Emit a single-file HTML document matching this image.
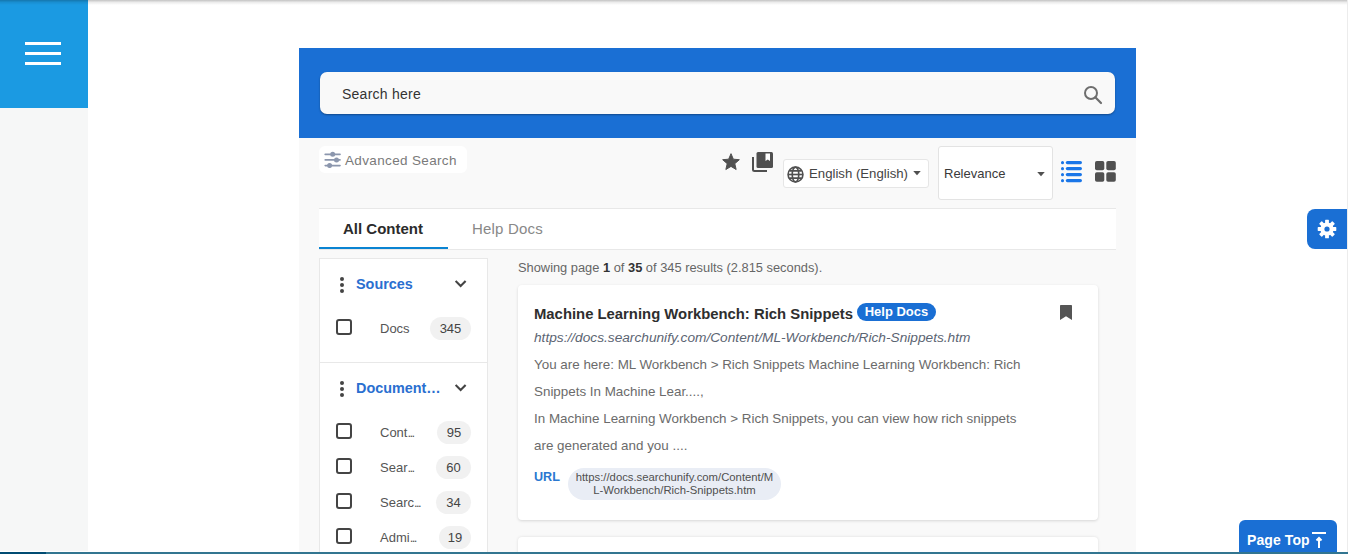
<!DOCTYPE html>
<html><head><meta charset="utf-8">
<style>
*{box-sizing:border-box;margin:0;padding:0}
html,body{width:1348px;height:554px;overflow:hidden;background:#fff;font-family:"Liberation Sans",sans-serif;position:relative}
.abs{position:absolute}
#topshadow{left:0;top:0;width:1348px;height:5px;background:linear-gradient(rgba(0,0,0,.24),rgba(0,0,0,.08) 45%,rgba(0,0,0,0))}
#side{left:0;top:0;width:88px;height:551px;background:#f6f7f7}
#sidetop{left:0;top:0;width:88px;height:108px;background:#1b9ae2}
.hb{left:25px;width:36px;height:3px;background:#fff}
#hdr{left:299px;top:48px;width:837px;height:90px;background:#1a6fd4}
#search{left:320px;top:72px;width:795px;height:42px;background:#f9f9f9;border-radius:7px;box-shadow:0 1px 2px rgba(0,0,0,.35)}
#search .ph{position:absolute;left:22px;top:14px;font-size:14px;color:#333;letter-spacing:0.25px}
#main{left:299px;top:138px;width:837px;height:416px;background:#f9f9f9}
#adv{left:319px;top:146px;width:148px;height:27px;background:#fff;border-radius:6px}
#adv span{position:absolute;left:25px;top:7px;font-size:13.5px;color:#7a7a7a;letter-spacing:0.35px}
#lang{left:783px;top:159px;width:146px;height:29px;background:#fff;border:1px solid #e6e6e6;border-radius:3px}
#lang span{position:absolute;left:25px;top:6px;font-size:13.2px;color:#444}
#rel{left:938px;top:146px;width:115px;height:54px;background:#fff;border:1px solid #e3e3e3;border-radius:3px}
#rel span{position:absolute;left:5px;top:19px;font-size:13px;color:#3a3a3a}
#tabs{left:319px;top:208px;width:797px;height:42px;background:#fff;border-top:1px solid #e8e8e8;border-bottom:1px solid #e8e8e8}
#tab1{left:24px;top:11px;font-size:15px;color:#2b2b2b;font-weight:bold}
#tab2{left:153px;top:11px;font-size:15px;color:#888;letter-spacing:0.2px}
#tabline{left:0;top:38px;width:129px;height:2px;background:#0a84d2}
#filt{left:319px;top:258px;width:169px;height:300px;background:#fff;border:1px solid #e8e8e8}
.fh{font-size:14.4px;color:#2a6fd0;font-weight:bold}
.chev{width:8px;height:8px;border-right:1.8px solid #444;border-bottom:1.8px solid #444;transform:rotate(45deg)}
.dots{width:4px;height:4px;border-radius:50%;background:#444;box-shadow:0 6px 0 #444,0 12px 0 #444}
.cb{width:16px;height:16px;border:2px solid #444;border-radius:3px;background:#fff}
.fl{font-size:13px;color:#555}
.cnt{height:23px;border-radius:12px;background:#f1f1f1;font-size:13px;color:#444;text-align:center;line-height:23px}
#showing{left:518px;top:260px;font-size:12.85px;color:#666}
#card{left:518px;top:285px;width:580px;height:235px;background:#fff;border-radius:4px;box-shadow:0 1px 3px rgba(0,0,0,.14)}
#card2{left:518px;top:537px;width:580px;height:40px;background:#fff;border-radius:4px;box-shadow:0 0 3px rgba(0,0,0,.12)}
#title{left:16px;top:21px;font-size:14.85px;font-weight:bold;color:#2e2e2e;white-space:nowrap}
#badge{left:339px;top:18px;width:79px;height:18px;border-radius:9px;background:#1a6fd4;color:#fff;font-size:13px;font-weight:bold;text-align:center;line-height:17px}
#curl{left:16px;top:45px;font-size:13.7px;font-style:italic;color:#5b6472;white-space:nowrap}
.snip{left:16px;font-size:13.4px;color:#6b6b6b;white-space:nowrap}
#urll{left:16px;top:185px;font-size:12.6px;font-weight:bold;color:#2a78d0}
#urlpill{left:50px;top:183px;width:213px;height:32px;border-radius:16px;background:#e9edf5;font-size:11.3px;color:#505050;text-align:center;line-height:13px;padding-top:3px}
#gear{left:1307px;top:209px;width:41px;height:40px;background:#1a6fd4;border-radius:8px 0 0 8px}
#ptop{left:1239px;top:520px;width:98px;height:40px;background:#1a6fd4;border-radius:6px 6px 0 0}
#ptop span{position:absolute;left:8px;top:12px;font-size:14px;letter-spacing:0.1px;font-weight:bold;color:#fff}
#botbar{left:0;top:552px;width:1348px;height:2px;background:#327590}
#botbar2{left:0;top:552px;width:46px;height:2px;background:#004b72}
#rline{left:1347px;top:0;width:1px;height:554px;background:#ececec}
</style></head>
<body>
<div id="side" class="abs"></div>
<div id="sidetop" class="abs">
  <div class="abs hb" style="top:42px"></div>
  <div class="abs hb" style="top:52px"></div>
  <div class="abs hb" style="top:62px"></div>
</div>
<div id="topshadow" class="abs"></div>

<div id="hdr" class="abs"></div>
<div id="search" class="abs"><span class="ph">Search here</span>
  <svg class="abs" style="left:763px;top:13px" width="20" height="20" viewBox="0 0 20 20"><circle cx="8" cy="8" r="6" fill="none" stroke="#6e6e6e" stroke-width="2"/><line x1="12.3" y1="12.3" x2="18" y2="18" stroke="#6e6e6e" stroke-width="2.2" stroke-linecap="round"/></svg>
</div>

<div id="main" class="abs"></div>
<div id="adv" class="abs">
  <svg class="abs" style="left:5px;top:5px" width="17" height="17" viewBox="0 0 17 17" fill="#8b96ad"><rect x="0.4" y="2.5" width="16.4" height="1.7" rx=".8"/><rect x="0.4" y="8.1" width="16.4" height="1.7" rx=".8"/><rect x="0.4" y="13.7" width="16.4" height="1.7" rx=".8"/><circle cx="8.7" cy="3.35" r="2.5"/><circle cx="12.5" cy="8.95" r="2.5"/><circle cx="5.6" cy="14.55" r="2.5"/></svg>
  <span style="left:26px">Advanced Search</span>
</div>

<svg class="abs" style="left:721px;top:152px" width="20" height="20" viewBox="0 0 24 24" fill="#505050" stroke="#505050" stroke-width="1.2" stroke-linejoin="round"><path d="M12 17.27L18.18 21l-1.64-7.03L22 9.24l-7.19-.61L12 2 9.19 8.63 2 9.24l5.46 4.73L5.82 21z"/></svg>
<svg class="abs" style="left:752px;top:152px" width="21" height="20" viewBox="0 0 21 20"><path d="M1 5v12.5c0 .8.7 1.5 1.5 1.5H15" fill="none" stroke="#505050" stroke-width="2"/><rect x="4.5" y="0" width="16.5" height="16" rx="1.5" fill="#505050"/><path d="M13.5 1.5h4.5v7.5l-2.25-1.6L13.5 9z" fill="#fff"/></svg>

<div id="lang" class="abs">
  <svg class="abs" style="left:3px;top:6px" width="17" height="17" viewBox="0 0 24 24" fill="none" stroke="#505050" stroke-width="2.3"><circle cx="12" cy="12" r="10.5"/><ellipse cx="12" cy="12" rx="4.6" ry="10.5"/><line x1="1.5" y1="12" x2="22.5" y2="12"/><path d="M3.5 6.8h17M3.5 17.2h17"/></svg>
  <span>English (English)</span>
  <svg class="abs" style="left:129px;top:11px" width="8" height="5" viewBox="0 0 9 6" fill="#505050"><path d="M0 0h9L4.5 5z"/></svg>
</div>
<div id="rel" class="abs"><span>Relevance</span>
  <svg class="abs" style="left:97.5px;top:24.5px" width="8" height="5" viewBox="0 0 9 6" fill="#505050"><path d="M0 0h9L4.5 5z"/></svg>
</div>
<svg class="abs" style="left:1061px;top:161px" width="21" height="21.5" viewBox="0 0 21 21.5" fill="#1a76e8"><rect x="0" y="0" width="3" height="3.2" rx="1.5"/><rect x="4.8" y="0" width="16.2" height="3.2" rx="1.6"/><rect x="0" y="6" width="3" height="3.2" rx="1.5"/><rect x="4.8" y="6" width="16.2" height="3.2" rx="1.6"/><rect x="0" y="12" width="3" height="3.2" rx="1.5"/><rect x="4.8" y="12" width="16.2" height="3.2" rx="1.6"/><rect x="0" y="18" width="3" height="3.2" rx="1.5"/><rect x="4.8" y="18" width="16.2" height="3.2" rx="1.6"/></svg>
<svg class="abs" style="left:1095px;top:161px" width="21" height="21" viewBox="0 0 21 21" fill="#505050"><rect x="0" y="0" width="9.3" height="9.3" rx="1.8"/><rect x="11.3" y="0" width="9.5" height="9.3" rx="1.8"/><rect x="0" y="11.2" width="9.3" height="9.6" rx="1.8"/><rect x="11.3" y="11.2" width="9.5" height="9.6" rx="1.8"/></svg>

<div id="tabs" class="abs">
  <div id="tab1" class="abs">All Content</div>
  <div id="tab2" class="abs">Help Docs</div>
  <div id="tabline" class="abs"></div>
</div>

<div id="filt" class="abs">
  <div class="abs dots" style="left:20px;top:18px"></div>
  <div class="abs fh" style="left:36px;top:17px">Sources</div>
  <svg class="abs" style="left:135.2px;top:21.4px" width="12" height="8" viewBox="0 0 12 8" fill="none" stroke="#444" stroke-width="2.1"><path d="M0.6 0.9L5.6 6l5-5.1"/></svg>
  <div class="abs cb" style="left:16px;top:60px"></div>
  <div class="abs fl" style="left:60px;top:62px">Docs</div>
  <div class="abs cnt" style="left:110px;top:58px;width:41px">345</div>
  <div class="abs" style="left:0;top:103px;width:167px;height:1px;background:#e8e8e8"></div>
  <div class="abs dots" style="left:20px;top:122px"></div>
  <div class="abs fh" style="left:36px;top:121px">Document…</div>
  <svg class="abs" style="left:135.2px;top:125.4px" width="12" height="8" viewBox="0 0 12 8" fill="none" stroke="#444" stroke-width="2.1"><path d="M0.6 0.9L5.6 6l5-5.1"/></svg>
  <div class="abs cb" style="left:16px;top:164px"></div>
  <div class="abs fl" style="left:60px;top:166px">Cont<span style="letter-spacing:-1.6px">...</span></div>
  <div class="abs cnt" style="left:117px;top:162px;width:34px">95</div>
  <div class="abs cb" style="left:16px;top:199px"></div>
  <div class="abs fl" style="left:60px;top:201px">Sear<span style="letter-spacing:-1.6px">...</span></div>
  <div class="abs cnt" style="left:116px;top:197px;width:35px">60</div>
  <div class="abs cb" style="left:16px;top:234px"></div>
  <div class="abs fl" style="left:60px;top:236px">Searc<span style="letter-spacing:-1.6px">...</span></div>
  <div class="abs cnt" style="left:116px;top:232px;width:35px">34</div>
  <div class="abs cb" style="left:16px;top:269px"></div>
  <div class="abs fl" style="left:60px;top:271px">Admi<span style="letter-spacing:-1.6px">...</span></div>
  <div class="abs cnt" style="left:119px;top:267px;width:32px">19</div>
</div>

<div id="showing" class="abs">Showing page <b style="color:#333">1</b> of <b style="color:#333">35</b> of 345 results (2.815 seconds).</div>

<div id="card" class="abs">
  <div id="title" class="abs">Machine Learning Workbench: Rich Snippets</div>
  <div id="badge" class="abs">Help Docs</div>
  <svg class="abs" style="left:542px;top:20px" width="12" height="15" viewBox="0 0 12 15" fill="#555"><path d="M0 1C0 .4.4 0 1 0h10c.6 0 1 .4 1 1v14L6 11.3 0 15z"/></svg>
  <div id="curl" class="abs">https://docs.searchunify.com/Content/ML-Workbench/Rich-Snippets.htm</div>
  <div class="abs snip" style="top:72px">You are here: ML Workbench &gt; Rich Snippets Machine Learning Workbench: Rich</div>
  <div class="abs snip" style="top:99px">Snippets In Machine Lear....,</div>
  <div class="abs snip" style="top:126px">In Machine Learning Workbench &gt; Rich Snippets, you can view how rich snippets</div>
  <div class="abs snip" style="top:153px">are generated and you ....</div>
  <div id="urll" class="abs">URL</div>
  <div id="urlpill" class="abs">https://docs.searchunify.com/Content/M<br>L-Workbench/Rich-Snippets.htm</div>
</div>
<div id="card2" class="abs"></div>

<div id="gear" class="abs">
  <svg class="abs" style="left:10px;top:10px" width="20" height="20" viewBox="-10 -10 20 20"><g fill="#fff"><rect x="-1.9" y="-9.3" width="3.8" height="5" rx="0.6" transform="rotate(0)"/><rect x="-1.9" y="-9.3" width="3.8" height="5" rx="0.6" transform="rotate(45)"/><rect x="-1.9" y="-9.3" width="3.8" height="5" rx="0.6" transform="rotate(90)"/><rect x="-1.9" y="-9.3" width="3.8" height="5" rx="0.6" transform="rotate(135)"/><rect x="-1.9" y="-9.3" width="3.8" height="5" rx="0.6" transform="rotate(180)"/><rect x="-1.9" y="-9.3" width="3.8" height="5" rx="0.6" transform="rotate(225)"/><rect x="-1.9" y="-9.3" width="3.8" height="5" rx="0.6" transform="rotate(270)"/><rect x="-1.9" y="-9.3" width="3.8" height="5" rx="0.6" transform="rotate(315)"/><circle r="6.6"/></g><circle r="2.6" fill="#1a6fd4"/></svg>
</div>
<div id="ptop" class="abs"><span>Page Top</span>
  <svg class="abs" style="left:73px;top:12px" width="14" height="17" viewBox="0 0 14 17" fill="none" stroke="#fff" stroke-width="2"><line x1="0" y1="1" x2="14" y2="1"/><line x1="7" y1="6" x2="7" y2="16"/><path d="M4.5 8.5L7 6l2.5 2.5"/></svg>
</div>
<div id="rline" class="abs"></div>
<div id="botbar" class="abs"></div>
<div id="botbar2" class="abs"></div>
</body></html>
